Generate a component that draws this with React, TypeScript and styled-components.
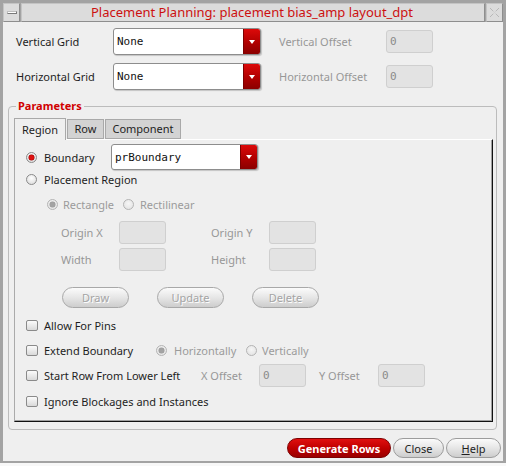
import React from "react";
import styled, { createGlobalStyle } from "styled-components";

const GlobalStyle = createGlobalStyle`
  html, body {
    margin: 0;
    padding: 0;
    background: #f8f8f8;
  }
  body {
    font-family: "Noto Sans", "DejaVu Sans", sans-serif;
    font-size: 11px;
    color: #1e1e1e;
  }
  * {
    box-sizing: border-box;
  }
`;

const MONO = `"DejaVu Sans Mono", "Liberation Mono", monospace`;

const Window = styled.div`
  width: 506px;
  height: 463px;
  border: 3px solid #a3a3a3;
  border-bottom-width: 2px;
  background: #efefef;
  display: flex;
  flex-direction: column;
`;

/* ---------- title bar ---------- */

const TitleBar = styled.div`
  display: flex;
  gap: 1px;
  height: 19px;
  flex: none;
  background: #a3a3a3;
`;

const FrameButton = styled.div`
  width: 17px;
  flex: none;
  background: #dcdcdc;
  border: 1px solid #c4c4c4;
  border-right-color: #8e8e8e;
  border-bottom-color: #8e8e8e;
  display: flex;
  align-items: center;
  justify-content: center;
`;

const MenuBar = styled.span`
  width: 10px;
  height: 3px;
  background: #fff;
  border: 1px solid #7a7a7a;
  border-top-color: #bdbdbd;
  border-left-color: #bdbdbd;
`;

const TitleBox = styled.div`
  flex: 1;
  background: #dcdcdc;
  border: 1px solid #c4c4c4;
  border-right-color: #8e8e8e;
  border-bottom-color: #8e8e8e;
  display: flex;
  align-items: center;
  justify-content: center;
  color: #cc1010;
  font-size: 13px;
  line-height: 17px;
  padding-right: 2px;
`;

/* ---------- top grid ---------- */

const TopForm = styled.div`
  display: grid;
  grid-template-columns: 97px 166px 107px 47px;
  row-gap: 8px;
  align-items: center;
  padding: 6px 0 0 13px;
`;

const FieldLabel = styled.span<{ $disabled?: boolean }>`
  color: ${(p) => (p.$disabled ? "#979797" : "#1e1e1e")};
  white-space: nowrap;
  line-height: 15px;
`;

const ComboBox = styled.div<{ $w: number; $h: number }>`
  display: flex;
  width: ${(p) => p.$w}px;
  height: ${(p) => p.$h}px;
  background: #fff;
  border: 1px solid #8d8d8d;
  border-radius: 3px;
  box-shadow: 1px 1px 1px rgba(0, 0, 0, 0.18);
  overflow: hidden;
`;

const ComboText = styled.span`
  flex: 1;
  display: flex;
  align-items: center;
  padding-left: 3px;
  font-family: ${MONO};
  font-size: 11px;
  color: #111;
`;

const ComboArrow = styled.span`
  width: 17px;
  flex: none;
  background: linear-gradient(#dc0a0a, #b00000 55%, #8a0000);
  border-left: 1px solid #7c0000;
  display: flex;
  align-items: center;
  justify-content: center;

  &::after {
    content: "";
    border-left: 3px solid transparent;
    border-right: 3px solid transparent;
    border-top: 4px solid #fff;
  }
`;

const TextInput = styled.div<{ $w?: number }>`
  width: ${(p) => p.$w ?? 47}px;
  height: 23px;
  background: #e3e3e3;
  border: 1px solid #cfcfcf;
  border-radius: 3px;
  display: flex;
  align-items: center;
  padding-left: 3px;
  font-family: ${MONO};
  font-size: 11px;
  color: #8a8a8a;
`;

/* ---------- group box + tabs ---------- */

const GroupBox = styled.div`
  position: relative;
  height: 324px;
  margin: 16px 6px 0 5px;
  border: 1px solid #bcbcbc;
  border-radius: 4px;
  padding: 11px 3px 7px 5px;
  display: flex;
  flex-direction: column;
`;

const GroupTitle = styled.span`
  position: absolute;
  top: -9px;
  left: 7px;
  padding: 0 2px;
  background: #efefef;
  color: #d00000;
  font-weight: 700;
  line-height: 15px;
`;

const TabBar = styled.div`
  display: flex;
  align-items: flex-end;
  height: 21px;
  flex: none;
`;

const Tab = styled.div<{ $w: number; $active?: boolean }>`
  width: ${(p) => p.$w}px;
  height: ${(p) => (p.$active ? 22 : 20)}px;
  margin-bottom: ${(p) => (p.$active ? -1 : 0)}px;
  margin-right: 1px;
  background: ${(p) => (p.$active ? "#efefef" : "#d3d3d3")};
  border: 1px solid #a9a9a9;
  border-bottom: ${(p) => (p.$active ? "none" : "1px solid #a9a9a9")};
  display: flex;
  align-items: center;
  justify-content: center;
  position: relative;
  z-index: ${(p) => (p.$active ? 1 : 0)};
  padding-bottom: 1px;
  color: #1e1e1e;
`;

const TabPanel = styled.div`
  flex: 1;
  border-top: 1px solid #fff;
  border-left: 1px solid #aaaaaa;
  border-right: 1px solid #111;
  border-bottom: 1px solid #111;
  box-shadow: inset -1px -1px 0 #a0a0a0;
  padding: 4px 0 0 11px;
  display: flex;
  flex-direction: column;
`;

const PanelRow = styled.div<{ $h: number; $mt?: number; $indent?: number }>`
  display: flex;
  align-items: center;
  height: ${(p) => p.$h}px;
  margin-top: ${(p) => p.$mt ?? 0}px;
  padding-left: ${(p) => p.$indent ?? 0}px;
  flex: none;
`;

const Slot = styled.div<{ $w: number }>`
  width: ${(p) => p.$w}px;
  flex: none;
  display: flex;
  align-items: center;
`;

const Choice = styled.label<{ $gap: number; $disabled?: boolean }>`
  display: flex;
  align-items: center;
  gap: ${(p) => p.$gap}px;
  white-space: nowrap;
  line-height: 15px;
  color: ${(p) => (p.$disabled ? "#9b9b9b" : "#1e1e1e")};
`;

const RadioDot = styled.span<{ $checked?: boolean; $disabled?: boolean }>`
  width: 11px;
  height: 11px;
  flex: none;
  border-radius: 50%;
  border: 1px solid ${(p) => (p.$disabled ? "#b4b4b4" : "#8a8a8a")};
  background: ${(p) =>
    p.$disabled
      ? "radial-gradient(circle at 50% 40%, #f6f6f6, #e0e0e0)"
      : "radial-gradient(circle at 50% 35%, #ffffff, #d6d6d6)"};
  display: flex;
  align-items: center;
  justify-content: center;

  &::after {
    content: "";
    display: ${(p) => (p.$checked ? "block" : "none")};
    width: 5px;
    height: 5px;
    border-radius: 50%;
    background: ${(p) => (p.$disabled ? "#a3a3a3" : "#dd1111")};
    box-shadow: 0 0 0 0.5px ${(p) => (p.$disabled ? "#999" : "#900")};
  }
`;

const CheckBox = styled.span`
  width: 12px;
  height: 11px;
  flex: none;
  border: 1px solid #8a8a8a;
  border-radius: 2px;
  background: linear-gradient(#fbfbfb, #d9d9d9);
`;

const PillButton = styled.div<{ $w: number; $h?: number }>`
  width: ${(p) => p.$w}px;
  height: ${(p) => p.$h ?? 21}px;
  flex: none;
  border: 1px solid #9c9c9c;
  border-radius: 11px;
  background: linear-gradient(#fbfbfb, #e6e6e6 50%, #cdcdcd);
  display: flex;
  align-items: center;
  justify-content: center;
  color: #1e1e1e;
  line-height: 15px;
`;

const DisabledButton = styled(PillButton)`
  color: #a4a4a4;
  text-shadow: 1px 1px 0 #fff;
  border-color: #a8a8a8;
`;

const PrimaryButton = styled(PillButton)`
  border-color: #7d0000;
  background: linear-gradient(#e01010, #c00000 50%, #9a0000);
  color: #fff;
  font-weight: 700;
`;

const ButtonRow = styled.div`
  display: flex;
  gap: 28px;
`;

const Footer = styled.div`
  display: flex;
  justify-content: flex-end;
  gap: 2px;
  margin-top: 8px;
  padding-right: 2px;
`;

const Mnemonic = styled.span`
  text-decoration: underline;
`;

function CloseGlyph() {
  return (
    <svg width="11" height="11" viewBox="0 0 11 11">
      <path
        d="M1 1 L4 4 M7 4 L10 1 M1 10 L4 7 M7 7 L10 10"
        stroke="#b8b8b8"
        strokeWidth="1"
        fill="none"
      />
      <path d="M4 4 L7 7 M7 4 L4 7" stroke="#d0d0d0" strokeWidth="1" fill="none" />
    </svg>
  );
}

function Combo({ value, w, h }: { value: string; w: number; h: number }) {
  return (
    <ComboBox $w={w} $h={h}>
      <ComboText>{value}</ComboText>
      <ComboArrow />
    </ComboBox>
  );
}

function Radio({
  label,
  checked,
  disabled,
  gap = 7,
}: {
  label: string;
  checked?: boolean;
  disabled?: boolean;
  gap?: number;
}) {
  return (
    <Choice $gap={gap} $disabled={disabled}>
      <RadioDot $checked={checked} $disabled={disabled} />
      {label}
    </Choice>
  );
}

function Check({ label }: { label: string }) {
  return (
    <Choice $gap={6}>
      <CheckBox />
      {label}
    </Choice>
  );
}

export default function App() {
  return (
    <>
      <GlobalStyle />
      <Window>
        <TitleBar>
          <FrameButton>
            <MenuBar />
          </FrameButton>
          <TitleBox>Placement Planning: placement bias_amp layout_dpt</TitleBox>
          <FrameButton>
            <CloseGlyph />
          </FrameButton>
        </TitleBar>

        <TopForm>
          <FieldLabel>Vertical Grid</FieldLabel>
          <Combo value="None" w={148} h={27} />
          <FieldLabel $disabled>Vertical Offset</FieldLabel>
          <TextInput>0</TextInput>

          <FieldLabel>Horizontal Grid</FieldLabel>
          <Combo value="None" w={148} h={27} />
          <FieldLabel $disabled>Horizontal Offset</FieldLabel>
          <TextInput>0</TextInput>
        </TopForm>

        <GroupBox>
          <GroupTitle>Parameters</GroupTitle>
          <TabBar>
            <Tab $w={52} $active>
              Region
            </Tab>
            <Tab $w={37}>Row</Tab>
            <Tab $w={76}>Component</Tab>
          </TabBar>
          <TabPanel>
            <PanelRow $h={26}>
              <Slot $w={85}>
                <Radio label="Boundary" checked />
              </Slot>
              <Combo value="prBoundary" w={147} h={26} />
            </PanelRow>
            <PanelRow $h={18}>
              <Radio label="Placement Region" />
            </PanelRow>

            <PanelRow $h={18} $mt={7} $indent={21}>
              <Slot $w={76}>
                <Radio label="Rectangle" checked disabled gap={5} />
              </Slot>
              <Radio label="Rectilinear" disabled gap={6} />
            </PanelRow>

            <PanelRow $h={22} $mt={8} $indent={35}>
              <Slot $w={58}>
                <FieldLabel $disabled>Origin X</FieldLabel>
              </Slot>
              <TextInput $w={47} />
              <Slot $w={45} />
              <Slot $w={58}>
                <FieldLabel $disabled>Origin Y</FieldLabel>
              </Slot>
              <TextInput $w={47} />
            </PanelRow>
            <PanelRow $h={22} $mt={5} $indent={35}>
              <Slot $w={58}>
                <FieldLabel $disabled>Width</FieldLabel>
              </Slot>
              <TextInput $w={47} />
              <Slot $w={45} />
              <Slot $w={58}>
                <FieldLabel $disabled>Height</FieldLabel>
              </Slot>
              <TextInput $w={47} />
            </PanelRow>

            <PanelRow $h={21} $mt={17} $indent={36}>
              <ButtonRow>
                <DisabledButton $w={67}>Draw</DisabledButton>
                <DisabledButton $w={67}>Update</DisabledButton>
                <DisabledButton $w={67}>Delete</DisabledButton>
              </ButtonRow>
            </PanelRow>

            <PanelRow $h={18} $mt={8}>
              <Check label="Allow For Pins" />
            </PanelRow>
            <PanelRow $h={18} $mt={7}>
              <Slot $w={130}>
                <Check label="Extend Boundary" />
              </Slot>
              <Slot $w={90}>
                <Radio label="Horizontally" checked disabled gap={7} />
              </Slot>
              <Radio label="Vertically" disabled gap={5} />
            </PanelRow>
            <PanelRow $h={22} $mt={5}>
              <Slot $w={175}>
                <Check label="Start Row From Lower Left" />
              </Slot>
              <Slot $w={58}>
                <FieldLabel $disabled>X Offset</FieldLabel>
              </Slot>
              <TextInput $w={47}>0</TextInput>
              <Slot $w={13} />
              <Slot $w={59}>
                <FieldLabel $disabled>Y Offset</FieldLabel>
              </Slot>
              <TextInput $w={47}>0</TextInput>
            </PanelRow>
            <PanelRow $h={18} $mt={6}>
              <Check label="Ignore Blockages and Instances" />
            </PanelRow>
          </TabPanel>
        </GroupBox>

        <Footer>
          <PrimaryButton $w={104} $h={20}>
            Generate Rows
          </PrimaryButton>
          <PillButton $w={51} $h={20}>
            Close
          </PillButton>
          <PillButton $w={55} $h={20}>
            <span>
              <Mnemonic>H</Mnemonic>elp
            </span>
          </PillButton>
        </Footer>
      </Window>
    </>
  );
}
